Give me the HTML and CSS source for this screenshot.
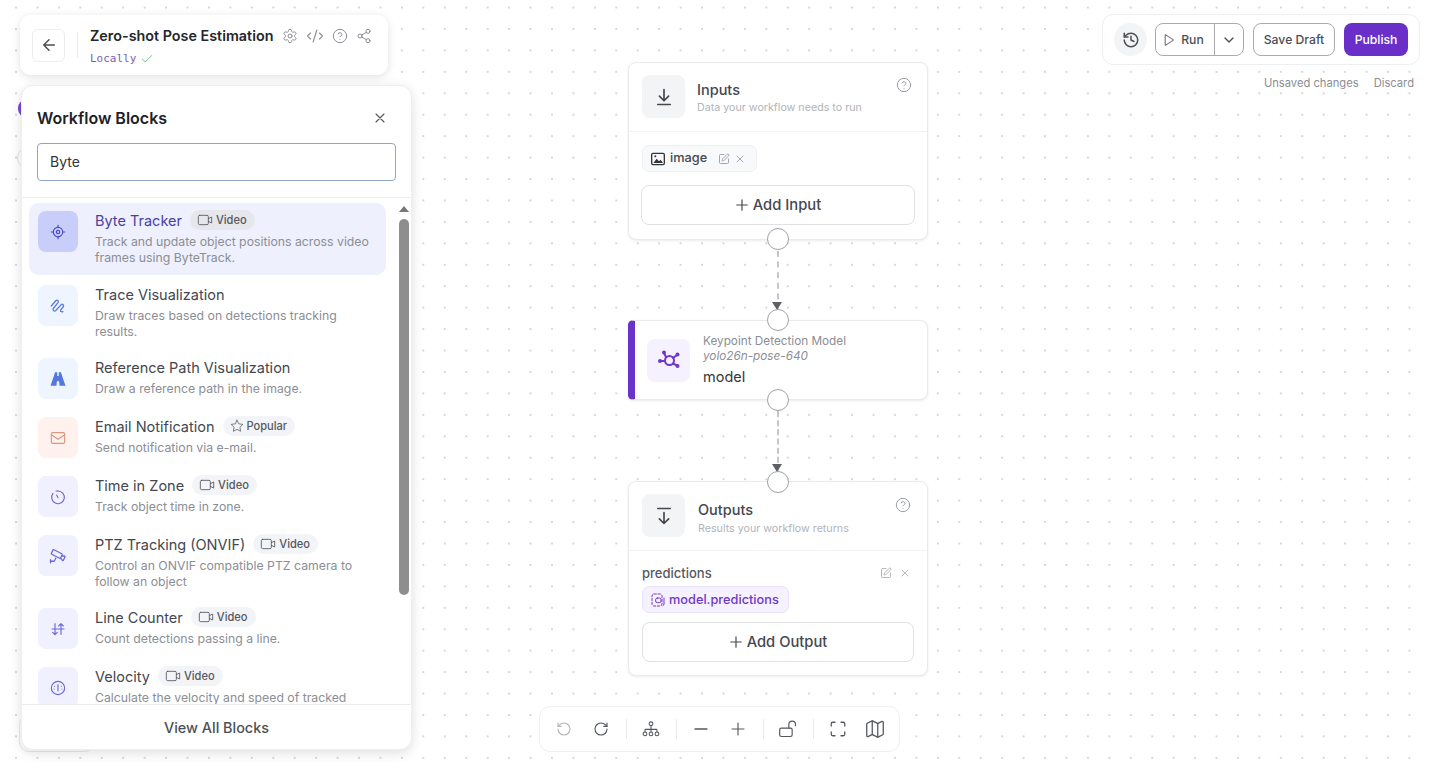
FILE: index.html
```html
<!DOCTYPE html>
<html lang="en">
<head>
    <meta charset="UTF-8">
    <meta name="viewport" content="width=device-width, initial-scale=1.0">
    <title>Zero-shot Pose Estimation</title>
    <link rel="stylesheet" href="styles.css">
</head>
<body>
    <svg class="sprites" xmlns="http://www.w3.org/2000/svg">
        <symbol id="i-back" viewBox="0 0 24 24"><path d="M19 12H5M12 19l-7-7 7-7"/></symbol>
        <symbol id="i-gear" viewBox="0 0 24 24"><path d="M12.22 2h-.44a2 2 0 0 0-2 2v.18a2 2 0 0 1-1 1.73l-.43.25a2 2 0 0 1-2 0l-.15-.08a2 2 0 0 0-2.73.73l-.22.38a2 2 0 0 0 .73 2.73l.15.1a2 2 0 0 1 1 1.72v.51a2 2 0 0 1-1 1.74l-.15.09a2 2 0 0 0-.73 2.73l.22.38a2 2 0 0 0 2.73.73l.15-.08a2 2 0 0 1 2 0l.43.25a2 2 0 0 1 1 1.73V20a2 2 0 0 0 2 2h.44a2 2 0 0 0 2-2v-.18a2 2 0 0 1 1-1.73l.43-.25a2 2 0 0 1 2 0l.15.08a2 2 0 0 0 2.73-.73l.22-.39a2 2 0 0 0-.73-2.73l-.15-.08a2 2 0 0 1-1-1.74v-.5a2 2 0 0 1 1-1.74l.15-.09a2 2 0 0 0 .73-2.73l-.22-.38a2 2 0 0 0-2.73-.73l-.15.08a2 2 0 0 1-2 0l-.43-.25a2 2 0 0 1-1-1.73V4a2 2 0 0 0-2-2z"/><circle cx="12" cy="12" r="3"/></symbol>
        <symbol id="i-code" viewBox="0 0 24 24"><path d="M18 16l4-4-4-4M6 8l-4 4 4 4M14.5 4l-5 16"/></symbol>
        <symbol id="i-help" viewBox="0 0 24 24"><circle cx="12" cy="12" r="10"/><path d="M9.09 9a3 3 0 0 1 5.83 1c0 2-3 3-3 3M12 17h.01"/></symbol>
        <symbol id="i-share" viewBox="0 0 24 24"><circle cx="18" cy="5" r="3"/><circle cx="6" cy="12" r="3"/><circle cx="18" cy="19" r="3"/><path d="M8.59 13.51l6.83 3.98M15.41 6.51l-6.82 3.98"/></symbol>
        <symbol id="i-check" viewBox="0 0 24 24"><path d="M20 6L9 17l-5-5"/></symbol>
        <symbol id="i-x" viewBox="0 0 24 24"><path d="M18 6L6 18M6 6l12 12"/></symbol>
        <symbol id="i-video" viewBox="0 0 24 24"><rect x="2" y="5" width="15" height="14" rx="2"/><path d="M17 10l5-2.5v9L17 14"/></symbol>
        <symbol id="i-star" viewBox="0 0 24 24"><path d="M12 2l3.09 6.26L22 9.27l-5 4.87 1.18 6.88L12 17.77l-6.18 3.25L7 14.14 2 9.27l6.91-1.01z"/></symbol>
        <symbol id="i-target" viewBox="0 0 24 24"><circle cx="12" cy="12" r="7"/><circle cx="12" cy="12" r="2.5"/><path d="M12 2v3M12 19v3M2 12h3M19 12h3"/></symbol>
        <symbol id="i-trace" viewBox="0 0 24 24"><path d="M3 12l6-7c2-2 4.500.5 3 2.500L6 15c-2 2.500 1 5 3 3l7-7.500c2-2 4.500.5 3 2.500l-3.500 4.500c-1 1.500 1.500 3 3 2"/></symbol>
        <symbol id="i-road" viewBox="0 0 24 24"><path class="solid" d="M8 3h3v5h2V3h3l1.500 5L22 21h-8l-.5-6h-3l-.5 6H2L6.500 8z"/></symbol>
        <symbol id="i-mail" viewBox="0 0 24 24"><rect x="2" y="4" width="20" height="16" rx="2"/><path d="M2 7l10 7 10-7"/></symbol>
        <symbol id="i-timer" viewBox="0 0 24 24"><path d="M12 3a9.500 9.500 0 1 1-7.500 3.700"/><path d="M9 3h3M12 13l-2-4"/></symbol>
        <symbol id="i-cctv" viewBox="0 0 24 24"><path d="M16.750 12h3.632a1 1 0 0 1 .894 1.447l-2.034 4.069a1 1 0 0 1-1.708.134l-2.124-2.970"/><path d="M17.106 9.053a1 1 0 0 1 .447 1.341l-2.106 4.211a1 1 0 0 1-1.342.447L3.610 9.690a1 1 0 0 1-.447-1.341l2.106-4.211a1 1 0 0 1 1.342-.447z"/><path d="M2 19h3.760a2 2 0 0 0 1.800-1.100L9 15M2 21v-4"/></symbol>
        <symbol id="i-counter" viewBox="0 0 24 24"><path d="M7.500 4v16M4 17l3.500 3.500L11 17M16.500 20V4M13 7.500L16.500 4 20 7.500M3 12h18"/></symbol>
        <symbol id="i-gauge" viewBox="0 0 24 24"><circle cx="12" cy="12" r="10"/><path d="M12 7v9M7 9.500h.01M17 9.500h.01M6 13.500h.01M18 13.500h.01"/></symbol>
        <symbol id="i-input" viewBox="0 0 24 24"><path d="M12 3v13M6.500 11l5.500 5.500 5.500-5.500M4.500 21h15"/></symbol>
        <symbol id="i-output" viewBox="0 0 24 24"><path d="M4.500 3h15M12 8v13M6.500 15.500L12 21l5.500-5.500"/></symbol>
        <symbol id="i-image" viewBox="0 0 24 24"><rect x="2.500" y="3.500" width="19" height="17" rx="2"/><path class="solid" d="M5 18l5-6.500 3.500 4 2.500-2.500 3.500 5z"/><circle class="solid" cx="8" cy="8" r="1.500"/></symbol>
        <symbol id="i-edit" viewBox="0 0 24 24"><path d="M12 3H5a2 2 0 0 0-2 2v14a2 2 0 0 0 2 2h14a2 2 0 0 0 2-2v-7"/><path d="M18.375 2.625a1 1 0 0 1 3 3l-9.013 9.014a2 2 0 0 1-.853.505l-2.873.840a.5.5 0 0 1-.620-.620l.840-2.873a2 2 0 0 1 .506-.852z"/></symbol>
        <symbol id="i-plus" viewBox="0 0 24 24"><path d="M12 3v18M3 12h18"/></symbol>
        <symbol id="i-model" viewBox="0 0 24 24"><circle cx="12.500" cy="12.500" r="4.500"/><path d="M9 9L7 5M16 10l4-3M16 15.500l4 2M8 13H3"/><circle class="solid" cx="7" cy="4.500" r="2"/><circle class="solid" cx="20.500" cy="6.500" r="2"/><circle class="solid" cx="20.500" cy="18" r="2"/><circle class="solid" cx="3" cy="13" r="2"/></symbol>
        <symbol id="i-ref" viewBox="0 0 24 24"><rect x="3" y="3" width="15" height="18" rx="3" stroke-dasharray="3.500 2.500"/><rect x="8.500" y="9" width="8" height="7" rx="2.500"/><path d="M21 9v9a3 3 0 0 1-1.500 2.600"/></symbol>
        <symbol id="i-history" viewBox="0 0 24 24"><path d="M3 12a9 9 0 1 0 9-9 9.750 9.750 0 0 0-6.740 2.740L3 8"/><path d="M3 3v5h5M12 7v5l4 2"/></symbol>
        <symbol id="i-play" viewBox="0 0 24 24"><path d="M6 3l14 9-14 9z"/></symbol>
        <symbol id="i-chevron" viewBox="0 0 24 24"><path d="M6 9l6 6 6-6"/></symbol>
        <symbol id="i-undo" viewBox="0 0 24 24"><path d="M3 12a9 9 0 1 0 9-9 9.750 9.750 0 0 0-6.740 2.740L3 8"/><path d="M3 3v5h5"/></symbol>
        <symbol id="i-redo" viewBox="0 0 24 24"><path d="M21 12a9 9 0 1 1-9-9c2.520 0 4.930 1 6.740 2.740L21 8"/><path d="M21 3v5h-5"/></symbol>
        <symbol id="i-tree" viewBox="0 0 24 24"><circle cx="12" cy="5" r="2.500"/><circle cx="4" cy="18.500" r="2.500"/><circle cx="12" cy="18.500" r="2.500"/><circle cx="20" cy="18.500" r="2.500"/><path d="M12 7.500V16M4 16v-2.500a1 1 0 0 1 1-1h14a1 1 0 0 1 1 1V16"/></symbol>
        <symbol id="i-minus" viewBox="0 0 24 24"><path d="M4 12h16"/></symbol>
        <symbol id="i-lock" viewBox="0 0 24 24"><rect x="2" y="11" width="15" height="10" rx="2"/><path d="M13 11V6.500a4 4 0 0 1 8 0V8"/></symbol>
        <symbol id="i-expand" viewBox="0 0 24 24"><path d="M8 3H5a2 2 0 0 0-2 2v3M21 8V5a2 2 0 0 0-2-2h-3M3 16v3a2 2 0 0 0 2 2h3M16 21h3a2 2 0 0 0 2-2v-3"/></symbol>
        <symbol id="i-map" viewBox="0 0 24 24"><path d="M14.106 5.553a2 2 0 0 0 1.788 0l3.659-1.830A1 1 0 0 1 21 4.619v12.764a1 1 0 0 1-.553.894l-4.553 2.277a2 2 0 0 1-1.788 0l-4.212-2.106a2 2 0 0 0-1.788 0l-3.659 1.830A1 1 0 0 1 3 19.381V6.618a1 1 0 0 1 .553-.894l4.553-2.277a2 2 0 0 1 1.788 0z"/><path d="M15 5.764v15M9 3.236v15"/></symbol>
    </svg>

    <div class="canvas">
        <!-- things of the graph hidden behind the blocks panel -->
        <div class="peek peek-bar"></div>
        <div class="peek peek-circle"></div>
        <div class="peek peek-card"></div>

        <header class="title-card">
            <button class="back-btn"><svg class="icon i18"><use href="#i-back"/></svg></button>
            <div class="title-sep"></div>
            <div class="title-text">
                <div class="title-row">
                    <h1>Zero-shot Pose Estimation</h1>
                    <div class="title-icons">
                        <svg class="icon i16"><use href="#i-gear"/></svg>
                        <svg class="icon i18"><use href="#i-code"/></svg>
                        <svg class="icon i16"><use href="#i-help"/></svg>
                        <svg class="icon i16"><use href="#i-share"/></svg>
                    </div>
                </div>
                <div class="status">Locally <svg class="icon i14"><use href="#i-check"/></svg></div>
            </div>
        </header>

        <aside class="blocks-panel">
            <div class="panel-top">
                <div class="panel-title">
                    <h2>Workflow Blocks</h2>
                    <svg class="icon i16 close-icon"><use href="#i-x"/></svg>
                </div>
                <input class="search" type="text" value="Byte">
            </div>
            <div class="block-list">
                <div class="block-item active">
                    <div class="block-icon tint-active"><svg class="icon i16"><use href="#i-target"/></svg></div>
                    <div class="block-text">
                        <div class="block-head"><span class="block-name">Byte Tracker</span><span class="badge dark"><svg class="icon i16 thin"><use href="#i-video"/></svg>Video</span></div>
                        <p class="block-desc">Track and update object positions across video frames using ByteTrack.</p>
                    </div>
                </div>
                <div class="block-item">
                    <div class="block-icon tint-blue"><svg class="icon i18"><use href="#i-trace"/></svg></div>
                    <div class="block-text">
                        <div class="block-head"><span class="block-name">Trace Visualization</span></div>
                        <p class="block-desc">Draw traces based on detections tracking results.</p>
                    </div>
                </div>
                <div class="block-item">
                    <div class="block-icon tint-blue"><svg class="icon i18"><use href="#i-road"/></svg></div>
                    <div class="block-text">
                        <div class="block-head"><span class="block-name">Reference Path Visualization</span></div>
                        <p class="block-desc">Draw a reference path in the image.</p>
                    </div>
                </div>
                <div class="block-item">
                    <div class="block-icon tint-orange"><svg class="icon i16"><use href="#i-mail"/></svg></div>
                    <div class="block-text">
                        <div class="block-head"><span class="block-name">Email Notification</span><span class="badge"><svg class="icon i14 thin"><use href="#i-star"/></svg>Popular</span></div>
                        <p class="block-desc">Send notification via e-mail.</p>
                    </div>
                </div>
                <div class="block-item">
                    <div class="block-icon tint-violet"><svg class="icon i16"><use href="#i-timer"/></svg></div>
                    <div class="block-text">
                        <div class="block-head"><span class="block-name">Time in Zone</span><span class="badge"><svg class="icon i16 thin"><use href="#i-video"/></svg>Video</span></div>
                        <p class="block-desc">Track object time in zone.</p>
                    </div>
                </div>
                <div class="block-item">
                    <div class="block-icon tint-violet"><svg class="icon i18"><use href="#i-cctv"/></svg></div>
                    <div class="block-text">
                        <div class="block-head"><span class="block-name">PTZ Tracking (ONVIF)</span><span class="badge"><svg class="icon i16 thin"><use href="#i-video"/></svg>Video</span></div>
                        <p class="block-desc">Control an ONVIF compatible PTZ camera to follow an object</p>
                    </div>
                </div>
                <div class="block-item">
                    <div class="block-icon tint-violet"><svg class="icon i16"><use href="#i-counter"/></svg></div>
                    <div class="block-text">
                        <div class="block-head"><span class="block-name">Line Counter</span><span class="badge"><svg class="icon i16 thin"><use href="#i-video"/></svg>Video</span></div>
                        <p class="block-desc">Count detections passing a line.</p>
                    </div>
                </div>
                <div class="block-item">
                    <div class="block-icon tint-violet"><svg class="icon i16"><use href="#i-gauge"/></svg></div>
                    <div class="block-text">
                        <div class="block-head"><span class="block-name">Velocity</span><span class="badge"><svg class="icon i16 thin"><use href="#i-video"/></svg>Video</span></div>
                        <p class="block-desc">Calculate the velocity and speed of tracked</p>
                    </div>
                </div>
                <div class="scroll-arrow"></div>
                <div class="scroll-thumb"></div>
            </div>
            <div class="panel-foot">View All Blocks</div>
        </aside>

        <!-- graph -->
        <section class="node node-inputs">
            <div class="node-head">
                <div class="node-icon"><svg class="icon i20"><use href="#i-input"/></svg></div>
                <div>
                    <h3>Inputs</h3>
                    <p>Data your workflow needs to run</p>
                </div>
                <svg class="icon i16 node-help"><use href="#i-help"/></svg>
            </div>
            <div class="node-body">
                <div class="chip">
                    <svg class="icon i16 chip-image"><use href="#i-image"/></svg>
                    <span class="chip-label">image</span>
                    <svg class="icon i12 muted chip-edit"><use href="#i-edit"/></svg>
                    <svg class="icon i12 muted"><use href="#i-x"/></svg>
                </div>
                <button class="add-btn"><svg class="icon i14"><use href="#i-plus"/></svg>Add Input</button>
            </div>
        </section>
        <div class="handle h1"></div>
        <div class="edge e1"></div>

        <section class="node node-model">
            <div class="model-icon"><svg class="icon i24"><use href="#i-model"/></svg></div>
            <div class="model-text">
                <div class="model-type">Keypoint Detection Model</div>
                <div class="model-id">yolo26n-pose-640</div>
                <div class="model-name">model</div>
            </div>
        </section>
        <div class="handle h2"></div>
        <div class="handle h3"></div>
        <div class="edge e2"></div>

        <section class="node node-outputs">
            <div class="node-head">
                <div class="node-icon"><svg class="icon i20"><use href="#i-output"/></svg></div>
                <div>
                    <h3>Outputs</h3>
                    <p>Results your workflow returns</p>
                </div>
                <svg class="icon i16 node-help"><use href="#i-help"/></svg>
            </div>
            <div class="node-body">
                <div class="output-row">
                    <span>predictions</span>
                    <svg class="icon i12 muted"><use href="#i-edit"/></svg>
                    <svg class="icon i12 muted"><use href="#i-x"/></svg>
                </div>
                <div class="ref-chip"><svg class="icon i16"><use href="#i-ref"/></svg>model.predictions</div>
                <button class="add-btn add-output"><svg class="icon i14"><use href="#i-plus"/></svg>Add Output</button>
            </div>
        </section>
        <div class="handle h4"></div>

        <div class="actions">
            <div class="actions-bar">
                <button class="history-btn"><svg class="icon i18"><use href="#i-history"/></svg></button>
                <div class="run-group">
                    <button class="run-btn"><svg class="icon i14"><use href="#i-play"/></svg>Run</button>
                    <button class="run-more"><svg class="icon i16"><use href="#i-chevron"/></svg></button>
                </div>
                <button class="draft-btn">Save Draft</button>
                <button class="publish-btn">Publish</button>
            </div>
            <div class="save-note"><span>Unsaved changes</span><span>Discard</span></div>
        </div>

        <nav class="controls">
            <span class="ctrl faded"><svg class="icon i16"><use href="#i-undo"/></svg></span>
            <span class="ctrl"><svg class="icon i16"><use href="#i-redo"/></svg></span>
            <span class="ctrl-sep"></span>
            <span class="ctrl"><svg class="icon i18 fine"><use href="#i-tree"/></svg></span>
            <span class="ctrl-sep"></span>
            <span class="ctrl"><svg class="icon i18"><use href="#i-minus"/></svg></span>
            <span class="ctrl"><svg class="icon i16"><use href="#i-plus"/></svg></span>
            <span class="ctrl-sep"></span>
            <span class="ctrl"><svg class="icon i20 fine"><use href="#i-lock"/></svg></span>
            <span class="ctrl-sep"></span>
            <span class="ctrl"><svg class="icon i18"><use href="#i-expand"/></svg></span>
            <span class="ctrl"><svg class="icon i22 fine"><use href="#i-map"/></svg></span>
        </nav>
    </div>
</body>
</html>
```

FILE: styles.css
```css
* {
    box-sizing: border-box;
}
body {
    margin: 0;
    background-color: #fff;
    font-family: Inter, "Noto Sans", sans-serif;
    color: #3f424a;
    overflow: hidden;
}
h1, h2, h3, p {
    margin: 0;
}
button {
    font-family: inherit;
    background: none;
    cursor: pointer;
}
.sprites {
    position: absolute;
    width: 0;
    height: 0;
}
.icon {
    flex: none;
    fill: none;
    stroke: currentColor;
    stroke-width: 2;
    stroke-linecap: round;
    stroke-linejoin: round;
}
.icon.thin {
    stroke-width: 1.3;
}
.solid {
    fill: currentColor;
    stroke: none;
}
.i12 { width: 12px; height: 12px; }
.i14 { width: 14px; height: 14px; }
.i16 { width: 16px; height: 16px; }
.i18 { width: 18px; height: 18px; }
.i20 { width: 20px; height: 20px; }
.i22 { width: 22px; height: 22px; }
.i24 { width: 24px; height: 24px; }
.muted {
    color: #a3a6ac;
}

/* canvas */
.canvas {
    position: relative;
    width: 1438px;
    height: 762px;
    padding-right: 18px;
    background-image: radial-gradient(circle, #d6d7da 0.8px, transparent 1.2px);
    background-size: 21.45px 21.45px;
    background-position: 5.3px -3.2px;
    background-clip: content-box;
}
.peek {
    position: absolute;
}
.peek-bar {
    left: 18px;
    top: 100px;
    width: 16px;
    height: 17px;
    border-radius: 8px;
    background-color: #7a48cf;
}
.peek-circle {
    left: 17px;
    top: 147px;
    width: 22px;
    height: 22px;
    border: 1px solid #e3e3e3;
    border-radius: 50%;
    background-color: #fff;
}
.peek-card {
    left: 19px;
    top: 714px;
    width: 76px;
    height: 38px;
    border: 1px solid #e9eaec;
    border-radius: 10px;
    background-color: #fff;
}

/* title card */
.title-card {
    position: absolute;
    left: 20px;
    top: 15px;
    width: 368px;
    height: 60px;
    padding: 0 12px;
    display: flex;
    align-items: center;
    background-color: #fff;
    border-radius: 11px;
    box-shadow: 0 2px 10px rgba(0, 0, 0, 0.12);
}
.back-btn {
    width: 33px;
    height: 33px;
    padding: 0;
    display: flex;
    align-items: center;
    justify-content: center;
    color: #4b4e55;
    border: 1px solid #eceded;
    border-radius: 6px;
}
.title-sep {
    width: 1px;
    height: 26px;
    margin: 0 12px;
    background-color: #e8e9eb;
}
.title-text {
    padding-top: 2px;
}
.title-row {
    display: flex;
    align-items: center;
    gap: 9px;
    height: 20px;
}
.title-card h1 {
    font-size: 14.35px;
    line-height: 20px;
    font-weight: 600;
    color: #24262b;
}
.title-icons {
    display: flex;
    align-items: center;
    gap: 8px;
    color: #8a8d93;
}
.title-icons .icon {
    stroke-width: 1.5;
}
.status {
    display: flex;
    align-items: center;
    gap: 4px;
    margin-top: 5px;
    font-family: "DejaVu Sans Mono", monospace;
    font-size: 11px;
    line-height: 16px;
    color: #7a5fb0;
}
.status .icon {
    color: #5fb37c;
    stroke-width: 1.5;
}

/* blocks panel */
.blocks-panel {
    position: absolute;
    left: 21px;
    top: 85px;
    width: 391px;
    height: 665px;
    display: flex;
    flex-direction: column;
    background-color: #fff;
    border: 1px solid #eeeff1;
    border-radius: 12px;
    box-shadow: 0 3px 12px rgba(0, 0, 0, 0.13);
}
.panel-top {
    padding: 17px 15px 16px;
    border-bottom: 1px solid #ebecee;
}
.panel-title {
    display: flex;
    align-items: center;
    justify-content: space-between;
    height: 30px;
    margin-bottom: 10px;
    padding-right: 8px;
}
.panel-title h2 {
    font-size: 16px;
    font-weight: 600;
    color: #1f2126;
}
.close-icon {
    color: #555;
    stroke-width: 1.6;
}
.search {
    display: block;
    width: 359px;
    height: 38px;
    padding: 0 12px 2px;
    font-family: inherit;
    font-size: 14px;
    color: #33353a;
    border: 1px solid #8fa6c2;
    border-radius: 4px;
    outline: none;
}
.block-list {
    position: relative;
    flex: 1;
    min-height: 0;
    overflow: hidden;
    padding: 5px 25px 0 7px;
}
.block-item {
    display: flex;
    gap: 17px;
    padding: 8px 9px;
    margin-bottom: 2px;
    border-radius: 10px;
}
.block-item.active {
    padding-bottom: 9px;
    background-color: #eef0fd;
}
.block-icon {
    flex: none;
    width: 40px;
    height: 41px;
    display: flex;
    align-items: center;
    justify-content: center;
    border-radius: 8px;
}
.block-icon .icon {
    stroke-width: 1.7;
}
.tint-active { background-color: #c9cdfa; color: #4b48c6; }
.tint-blue { background-color: #eff5ff; color: #5478dc; }
.tint-orange { background-color: #fff2ee; color: #e0957f; }
.tint-violet { background-color: #f0f0fe; color: #6b67d6; }
.block-text {
    min-width: 0;
}
.block-head {
    display: flex;
    align-items: center;
    gap: 8px;
    height: 20px;
    margin-top: -1px;
    margin-bottom: 4px;
}
.block-name {
    font-size: 14.5px;
    color: #44474f;
}
.active .block-name {
    color: #4a3fa5;
}
.badge {
    display: flex;
    align-items: center;
    gap: 3px;
    height: 20px;
    padding: 0 8px 0 7px;
    font-size: 11.1px;
    font-weight: 500;
    color: #55585f;
    background-color: #f3f4f7;
    border-radius: 10px;
}
.badge.dark {
    background-color: #e6e7eb;
}
.block-desc {
    font-size: 12.28px;
    line-height: 16px;
    color: #8b8e95;
}
.scroll-arrow {
    position: absolute;
    left: 377px;
    top: 8px;
    width: 0;
    height: 0;
    border-left: 5px solid transparent;
    border-right: 5px solid transparent;
    border-bottom: 6px solid #777;
}
.scroll-thumb {
    position: absolute;
    left: 377px;
    top: 21px;
    width: 10px;
    height: 376px;
    background-color: #8e8e8e;
    border-radius: 5px;
}
.panel-foot {
    height: 45px;
    display: flex;
    align-items: center;
    justify-content: center;
    font-size: 14.4px;
    font-weight: 500;
    color: #4c4f57;
    border-top: 1px solid #ebecee;
}

/* graph nodes */
.node {
    position: absolute;
    left: 628px;
    width: 300px;
    background-color: #fff;
    border: 1px solid #e9eaec;
    border-radius: 8px;
    box-shadow: 0 1px 3px rgba(0, 0, 0, 0.08);
}
.node-inputs {
    top: 62px;
    height: 178px;
}
.node-outputs {
    top: 481px;
    height: 195px;
}
.node-head {
    position: relative;
    display: flex;
    gap: 12px;
    height: 69px;
    padding: 12px 13px 0;
    border-bottom: 1px solid #f1f2f3;
}
.node-icon {
    flex: none;
    width: 43px;
    height: 43px;
    display: flex;
    align-items: center;
    justify-content: center;
    color: #44474f;
    background-color: #f3f4f6;
    border-radius: 8px;
}
.node-head h3 {
    margin-top: 5px;
    font-size: 14.5px;
    line-height: 20px;
    font-weight: 500;
    color: #44474f;
}
.node-head p {
    font-size: 10.7px;
    line-height: 15px;
    color: #b1b4ba;
}
.node-outputs .node-head {
    gap: 13px;
}
.node-outputs .node-head h3 {
    margin-top: 6px;
}
.node-outputs .node-head p {
    margin-top: 1px;
}
.node-help {
    position: absolute;
    right: 15px;
    top: 14px;
    color: #9a9da3;
    stroke-width: 1.5;
}
.node-outputs .node-help {
    right: 16px;
    top: 15px;
}
.node-body {
    padding: 13px 13px 0;
}
.chip {
    display: inline-flex;
    align-items: center;
    gap: 4px;
    height: 27px;
    padding: 0 10px 0 7px;
    font-size: 12.75px;
    font-weight: 500;
    color: #44474f;
    background-color: #f8f9fb;
    border: 1px solid #eff0f3;
    border-radius: 7px;
}
.chip-label {
    padding-bottom: 2px;
}
.chip-edit {
    margin-left: 7px;
}
.chip-image {
    color: #33353a;
}
.add-btn {
    display: flex;
    align-items: center;
    justify-content: center;
    gap: 4px;
    width: 274px;
    height: 40px;
    margin-top: 13px;
    margin-left: -1px;
    padding: 0 0 1px;
    font-size: 14.75px;
    font-weight: 500;
    color: #44474f;
    background-color: #fff;
    border: 1px solid #e0e1e5;
    border-radius: 8px;
}
.add-output {
    width: 272px;
    margin-top: 9px;
    margin-left: 0;
}
.output-row {
    display: flex;
    align-items: center;
    gap: 7px;
    height: 17px;
    padding-right: 3px;
    font-size: 13px;
    font-weight: 500;
    color: #55585f;
}
.output-row span {
    flex: 1;
}
.output-row .icon {
    stroke-width: 1.6;
}
.ref-chip {
    display: inline-flex;
    align-items: center;
    gap: 3px;
    height: 27px;
    margin-top: 5px;
    padding: 0 9px 0 7px;
    font-size: 12.75px;
    font-weight: 500;
    color: #7038c4;
    background-color: #f5f1fe;
    border: 1px solid #e9e2fb;
    border-radius: 7px;
}
.ref-chip .icon {
    stroke-width: 1.5;
}
.node-model {
    top: 320px;
    height: 80px;
    display: flex;
    align-items: center;
    padding-left: 12px;
    border-left: 7px solid #6a32c9;
    border-radius: 5px 8px 8px 5px;
}
.model-icon {
    flex: none;
    width: 43px;
    height: 43px;
    display: flex;
    align-items: center;
    justify-content: center;
    color: #7038c8;
    background-color: #f5f1fe;
    border-radius: 8px;
}
.model-text {
    margin-left: 13px;
}
.model-type, .model-id {
    font-size: 11.75px;
    line-height: 15px;
    color: #8b8e95;
}
.model-id {
    font-style: italic;
}
.model-name {
    margin-top: 3px;
    font-size: 14.5px;
    line-height: 20px;
    color: #33353a;
}
.handle {
    position: absolute;
    left: 767px;
    width: 22px;
    height: 22px;
    background-color: #fff;
    border: 1px solid #a0a2a6;
    border-radius: 50%;
}
.h1 { top: 228px; }
.h2 { top: 309px; }
.h3 { top: 389px; }
.h4 { top: 471px; }
.edge {
    position: absolute;
    left: 777px;
    width: 2px;
    border-left: 2px dashed #c5c6c9;
}
.edge::after {
    content: "";
    position: absolute;
    left: -7px;
    bottom: 0;
    border-left: 5.500px solid transparent;
    border-right: 5.500px solid transparent;
    border-top: 8px solid #5c5f66;
}
.e1 { top: 251px; height: 59px; }
.e2 { top: 411px; height: 61px; }

/* top right actions */
.actions {
    position: absolute;
    left: 1102px;
    top: 14px;
    width: 318px;
}
.actions-bar {
    height: 51px;
    display: flex;
    align-items: center;
    padding: 0 11px;
    background-color: #fff;
    border: 1px solid #eeeff1;
    border-radius: 11px;
}
.history-btn {
    width: 33px;
    height: 33px;
    padding: 0;
    display: flex;
    align-items: center;
    justify-content: center;
    color: #4b4e55;
    background-color: #f3f4f6;
    border: none;
    border-radius: 50%;
}
.run-group {
    display: flex;
    height: 33px;
    margin-left: 8px;
    color: #4b4e55;
    border: 1px solid #a9abaf;
    border-radius: 8px;
}
.run-btn {
    width: 59px;
    display: flex;
    align-items: center;
    justify-content: center;
    gap: 5px;
    padding: 0 4px 0 0;
    font-size: 12.2px;
    font-weight: 500;
    color: inherit;
    border: none;
    border-right: 1px solid #a9abaf;
}
.run-btn .icon {
    stroke-width: 1.5;
}
.run-more {
    width: 28px;
    display: flex;
    align-items: center;
    justify-content: center;
    padding: 0;
    color: inherit;
    border: none;
}
.draft-btn {
    width: 82px;
    height: 33px;
    margin-left: 9px;
    padding: 0;
    font-size: 12.2px;
    font-weight: 500;
    color: #4b4e55;
    border: 1px solid #a9abaf;
    border-radius: 8px;
}
.publish-btn {
    width: 64px;
    height: 33px;
    margin-left: 9px;
    padding: 0;
    font-size: 12.2px;
    font-weight: 500;
    color: #fff;
    background-color: #6a2fc9;
    border: none;
    border-radius: 8px;
}
.save-note {
    display: flex;
    justify-content: flex-end;
    gap: 15px;
    margin-top: 10px;
    padding-right: 6px;
    font-size: 11.2px;
    line-height: 16px;
    color: #8b8e95;
}

/* bottom controls */
.controls {
    position: absolute;
    left: 539px;
    top: 706px;
    width: 361px;
    height: 46px;
    display: flex;
    align-items: center;
    padding: 0 16px;
    color: #55585f;
    background-color: #fff;
    border: 1px solid #eeeff1;
    border-radius: 11px;
}
.ctrl {
    width: 16px;
    display: flex;
    align-items: center;
    justify-content: center;
}
.ctrl + .ctrl {
    margin-left: 21px;
}
.ctrl .icon {
    stroke-width: 1.7;
}
.ctrl .icon.fine {
    stroke-width: 1.4;
}
.controls .faded {
    color: #b4b6ba;
}
.ctrl-sep {
    width: 1px;
    height: 20px;
    margin: 0 16.800px;
    background-color: #e8e9eb;
}
```
